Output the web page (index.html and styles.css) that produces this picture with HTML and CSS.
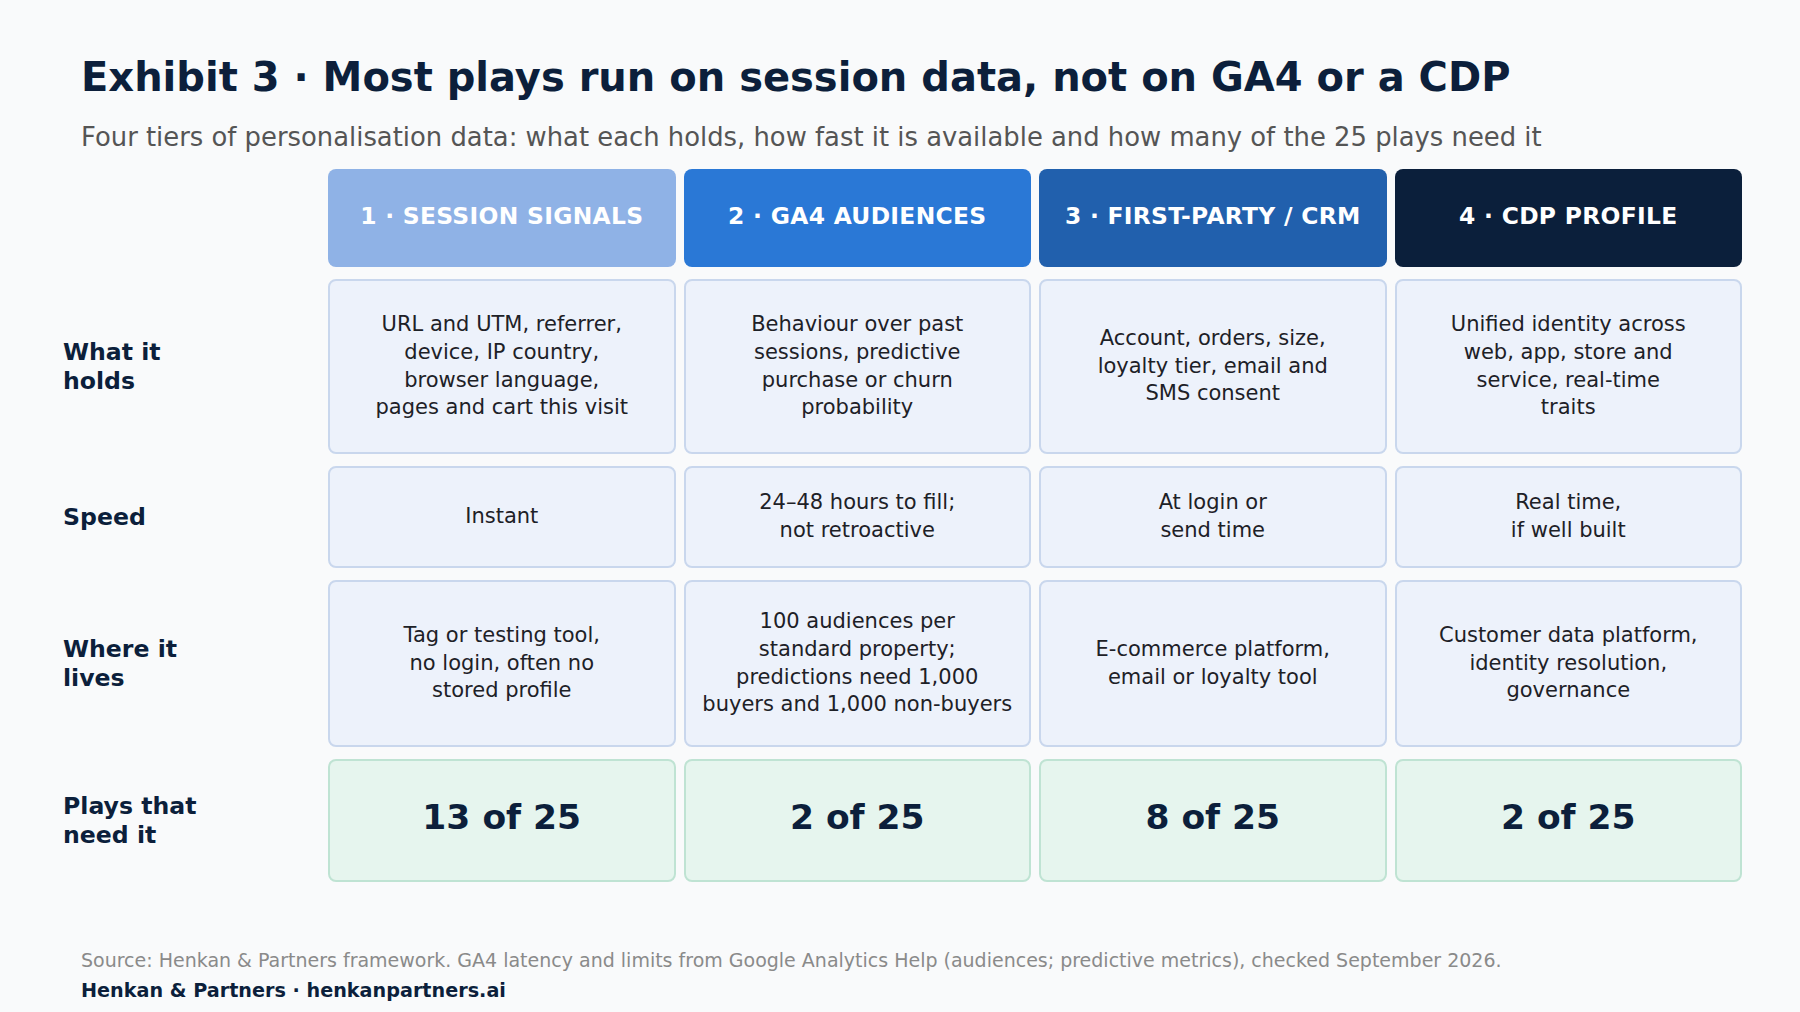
FILE: index.html
```html
<!DOCTYPE html>
<html lang="en">
<head>
<meta charset="utf-8">
<title>Exhibit 3</title>
<link rel="stylesheet" href="styles.css">
</head>
<body>
<div class="page">
  <header class="head">
    <h1 class="title">Exhibit 3 · Most plays run on session data, not on GA4 or a CDP</h1>
    <p class="subtitle">Four tiers of personalisation data: what each holds, how fast it is available and how many of the 25 plays need it</p>
  </header>

  <div class="grid">
    <div class="corner"></div>
    <div class="tier t1">1 · SESSION SIGNALS</div>
    <div class="tier t2">2 · GA4 AUDIENCES</div>
    <div class="tier t3">3 · FIRST-PARTY / CRM</div>
    <div class="tier t4">4 · CDP PROFILE</div>

    <div class="label">What it holds</div>
    <div class="cell">URL and UTM, referrer,<br>device, IP country,<br>browser language,<br>pages and cart this visit</div>
    <div class="cell">Behaviour over past<br>sessions, predictive<br>purchase or churn<br>probability</div>
    <div class="cell">Account, orders, size,<br>loyalty tier, email and<br>SMS consent</div>
    <div class="cell">Unified identity across<br>web, app, store and<br>service, real-time<br>traits</div>

    <div class="label">Speed</div>
    <div class="cell">Instant</div>
    <div class="cell">24–48 hours to fill;<br>not retroactive</div>
    <div class="cell">At login or<br>send time</div>
    <div class="cell">Real time,<br>if well built</div>

    <div class="label">Where it lives</div>
    <div class="cell">Tag or testing tool,<br>no login, often no<br>stored profile</div>
    <div class="cell">100 audiences per<br>standard property;<br>predictions need 1,000<br>buyers and 1,000 non-buyers</div>
    <div class="cell">E-commerce platform,<br>email or loyalty tool</div>
    <div class="cell">Customer data platform,<br>identity resolution,<br>governance</div>

    <div class="label">Plays that need it</div>
    <div class="cell count">13 of 25</div>
    <div class="cell count">2 of 25</div>
    <div class="cell count">8 of 25</div>
    <div class="cell count">2 of 25</div>
  </div>

  <footer class="foot">
    <p class="source">Source: Henkan &amp; Partners framework. GA4 latency and limits from Google Analytics Help (audiences; predictive metrics), checked September 2026.</p>
    <p class="brand">Henkan &amp; Partners · henkanpartners.ai</p>
  </footer>
</div>
</body>
</html>
```

FILE: styles.css
```css
* { box-sizing: border-box; }

html, body {
  margin: 0;
  padding: 0;
  background: #f9fafb;
}

body {
  font-family: "DejaVu Sans", "Liberation Sans", sans-serif;
  color: #1f2329;
}

.page {
  width: 1800px;
  height: 1012px;
  padding-top: 53px;
  overflow: hidden;
}

.head {
  padding-left: 81px;
}

.title {
  margin: 0;
  font-size: 40px;
  line-height: 1.2;
  font-weight: 700;
  color: #0c1f3b;
}

.subtitle {
  margin: 21px 0 0 0;
  font-size: 25.85px;
  line-height: 1.2;
  color: #555555;
}

.grid {
  display: grid;
  grid-template-columns: 257px repeat(4, 1fr);
  grid-template-rows: 98px 175px 102px 167px 123px;
  column-gap: 8px;
  row-gap: 12px;
  margin: 16px 58px 0 63px;
}

.tier {
  display: flex;
  align-items: center;
  justify-content: center;
  border-radius: 8px;
  color: #ffffff;
  font-weight: 700;
  font-size: 23.4px;
  letter-spacing: 0.3px;
  padding-bottom: 5px;
}

.t1 { background: #8fb2e6; }
.t2 { background: #2a78d6; }
.t3 { background: #2160ad; }
.t4 { background: #0b1f3b; }

.label {
  display: flex;
  align-items: center;
  max-width: 165px;
  font-size: 23.6px;
  line-height: 1.2;
  font-weight: 700;
  color: #0c1f3b;
}

.cell {
  display: flex;
  align-items: center;
  justify-content: center;
  text-align: center;
  background: #edf2fb;
  border: 2px solid #c9d7ed;
  border-radius: 8px;
  font-size: 21px;
  line-height: 1.32;
  color: #1d2127;
  padding: 0 8px;
}

.cell.count {
  background: #e6f5ee;
  border-color: #bfe3d3;
  font-size: 34.5px;
  font-weight: 700;
  color: #0c1f3b;
  padding-bottom: 5px;
}

.foot {
  padding-left: 81px;
  margin-top: 66px;
}

.source {
  margin: 0;
  font-size: 19px;
  line-height: 1.3;
  color: #8a8a8a;
}

.brand {
  margin: 6px 0 0 0;
  font-size: 19.2px;
  line-height: 1.3;
  font-weight: 700;
  color: #0c1f3b;
}
```
